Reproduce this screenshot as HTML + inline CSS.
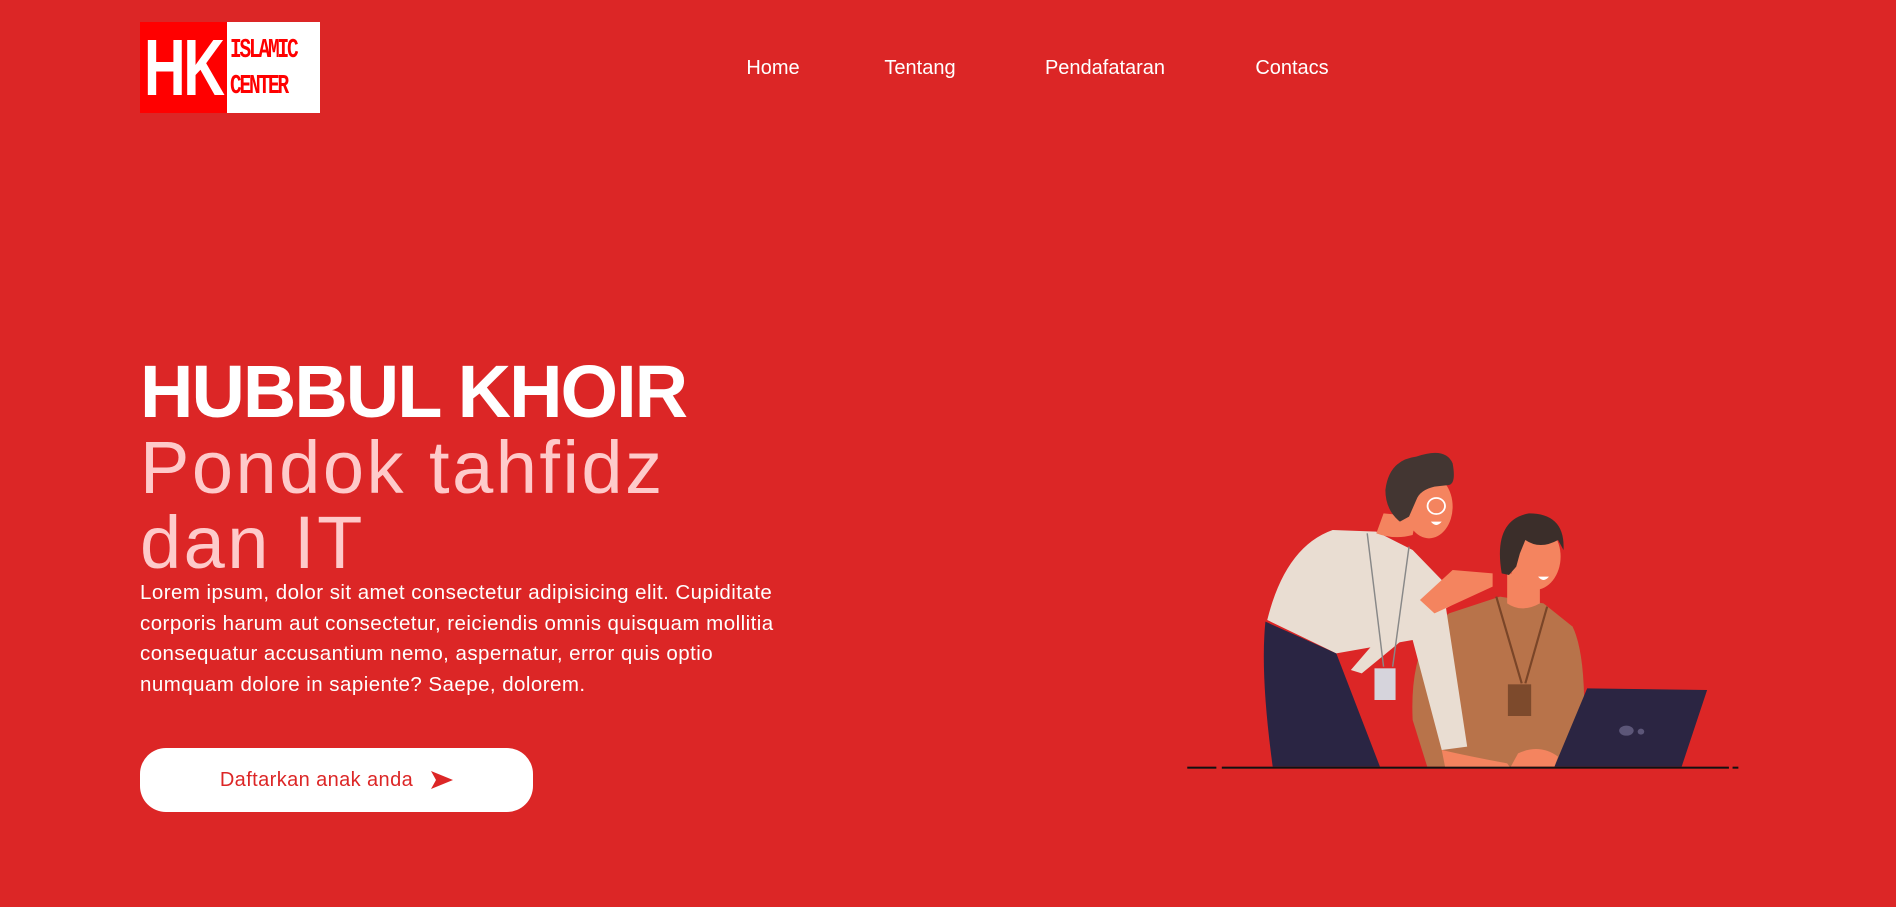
<!DOCTYPE html>
<html><head><meta charset="utf-8"><style>
*{margin:0;padding:0;box-sizing:border-box}
body{width:1896px;height:907px;background:#dc2626;font-family:"Liberation Sans",sans-serif;overflow:hidden;position:relative;color:#fff}
.logo{position:absolute;left:140px;top:22px;width:180px;height:91px;background:#fff}
.logo .hk{position:absolute;left:0;top:0;width:87px;height:91px;background:#ff0000;overflow:hidden}
.logo .hk span{position:absolute;left:4px;top:0;color:#fff;font:bold 80px/91px "Liberation Sans",sans-serif;letter-spacing:-3px;transform:scaleX(.72);transform-origin:left}
.logo .t{position:absolute;left:90px;color:#ff0000;font:bold 27px/1 "Liberation Mono",monospace;letter-spacing:-3px;transform:scaleX(.72);transform-origin:left}
nav a{position:absolute;top:57px;font-size:20px;color:#fff;text-decoration:none;transform:translateX(-50%)}
h1{position:absolute;left:140px;top:355px;font-size:74px;font-weight:bold;letter-spacing:-2px;line-height:1}
.sub{position:absolute;left:140px;top:430px;font-size:74px;line-height:75px;color:#fecaca;letter-spacing:2.5px}
p{position:absolute;left:140px;top:578px;width:672px;font-size:20.5px;line-height:30.5px;letter-spacing:.45px}
.btn{position:absolute;left:140px;top:748px;width:393px;height:64px;background:#fff;border-radius:26px;color:#dc2626;font-size:20px;letter-spacing:.4px;display:flex;align-items:center;justify-content:center;gap:18px}
</style></head><body>
<div class="logo"><div class="hk"><span>HK</span></div><div class="t" style="top:16px">ISLAMIC</div><div class="t" style="top:52px">CENTER</div></div>
<nav><a style="left:773px">Home</a><a style="left:920px">Tentang</a><a style="left:1105px">Pendafataran</a><a style="left:1292px">Contacs</a></nav>
<h1>HUBBUL KHOIR</h1>
<div class="sub">Pondok tahfidz<br>dan IT</div>
<p>Lorem ipsum, dolor sit amet consectetur adipisicing elit. Cupiditate corporis harum aut consectetur, reiciendis omnis quisquam mollitia consequatur accusantium nemo, aspernatur, error quis optio numquam dolore in sapiente? Saepe, dolorem.</p>
<div class="btn">Daftarkan anak anda <svg width="22" height="18" viewBox="0 0 22 18"><path d="M0 0L22 9L0 18L5 9Z" fill="#dc2626"/></svg></div>
<svg style="position:absolute;left:1180px;top:440px" width="570" height="340" viewBox="0 0 1568 1020" preserveAspectRatio="none">
<path d="M680 980L640 840Q630 600 740 520L880 470L1000 490L1080 560Q1120 650 1110 900L1100 980Z" fill="#b8734a"/>
<path d="M870 470L940 730M1010 500L950 730" stroke="#7a4528" stroke-width="6" fill="none"/>
<rect x="902" y="733" width="64" height="95" fill="#7d4a2c"/>
<path d="M900 400L900 490Q940 520 990 490L990 400Z" fill="#f4845f"/>
<ellipse cx="975" cy="350" rx="72" ry="100" fill="#f4845f"/>
<path d="M885 400Q860 240 960 220Q1060 220 1055 330L1040 300Q990 330 950 300L935 340L925 380L905 405Z" fill="#3b2e2a"/>
<path d="M985 410Q1000 430 1015 410Z" fill="#fff"/>
<path d="M1120 745L1450 750L1380 980L1030 980Z" fill="#2b2542"/>
<ellipse cx="1228" cy="872" rx="20" ry="15" fill="#5c5678"/><circle cx="1268" cy="875" r="9" fill="#5c5678"/>
<path d="M930 940Q990 910 1040 950L1030 980L910 980Z" fill="#f4845f"/>
<path d="M235 545L430 640L550 980L255 980Q220 700 235 545Z" fill="#2a2543"/>
<path d="M240 540Q290 320 420 270L540 275L640 330L720 420L790 920L720 930L640 600L430 640Z" fill="#e9ddd2"/>
<path d="M470 690L620 500L760 420L860 410L840 440L690 530L500 700Z" fill="#e9ddd2"/>
<path d="M660 480L750 390L860 400L860 440L700 520Z" fill="#f4845f"/>
<path d="M720 930Q800 950 900 970L910 985L730 985Z" fill="#f4845f"/>
<path d="M515 280L560 680M630 320L585 680" stroke="#888" stroke-width="4" fill="none"/>
<rect x="535" y="685" width="58" height="95" fill="#d6d4dc"/>
<path d="M560 220L540 280Q590 300 640 285L650 230Z" fill="#f4845f"/>
<ellipse cx="685" cy="200" rx="65" ry="95" fill="#f4845f"/>
<path d="M565 150Q575 60 650 50Q730 20 750 70Q760 130 740 135L700 140Q660 150 650 180L630 230L605 245Q565 210 565 150Z" fill="#433632"/>
<circle cx="705" cy="198" r="24" fill="none" stroke="#fff" stroke-width="5"/>
<path d="M690 245Q705 265 720 245Z" fill="#fff"/>
<rect x="20" y="980" width="80" height="6" fill="#111"/><rect x="115" y="980" width="1395" height="6" fill="#111"/><rect x="1520" y="980" width="16" height="6" fill="#111"/>
</svg>
</body></html>
